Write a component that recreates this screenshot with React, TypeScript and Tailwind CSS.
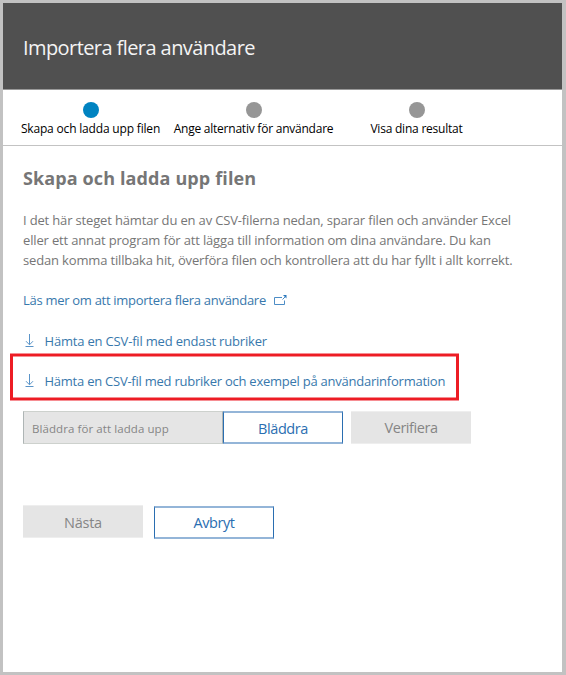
import React from "react";

const steps = [
  { label: "Skapa och ladda upp filen", dot: "bg-[#0083c1]", text: "tracking-[-0.18px]" },
  { label: "Ange alternativ för användare", dot: "bg-[#969696]", text: "tracking-[-0.23px]" },
  { label: "Visa dina resultat", dot: "bg-[#969696]", text: "tracking-[-0.22px]" },
];

function DownloadIcon() {
  return (
    <svg className="h-[14px] w-[9px] shrink-0" viewBox="0 0 9 14" fill="none" stroke="#5a94c8">
      <path d="M4.5 0v10.5M1 7.2l3.5 3.6L8 7.2M.5 12.5h8" />
    </svg>
  );
}

function ExternalIcon() {
  return (
    <svg className="h-[11px] w-[13px] shrink-0" viewBox="0 0 13 11" fill="none" stroke="#4d8dc6">
      <path d="M8 2.5H.5v7h10V5.5M8.5 4.5l3-3" />
      <path d="M9 0h3.5v3.5z" fill="#2a78bd" stroke="none" />
    </svg>
  );
}

export default function App() {
  return (
    <div className="h-[675px] w-[566px] whitespace-nowrap border-[3px] border-r-4 border-[#c2c2c2] bg-white font-['Open_Sans','Noto_Sans',sans-serif] text-[13px] leading-5">
      <header className="flex h-[87px] items-center border-b border-[#999] bg-[#505050] pl-5 pt-[3px] text-[#f4f4f4]">
        <h1 className="text-[20px] font-normal tracking-[-0.58px]">Importera flera användare</h1>
      </header>
      <nav className="flex h-14 border-b border-[#c3c3c3] pl-[6px] pt-3 text-black">
        {steps.map((s) => (
          <div key={s.label} className="flex w-[163px] flex-col items-center">
            <span className={`h-4 w-4 rounded-full ${s.dot}`} />
            <span className={`mt-px text-[12px] leading-5 ${s.text}`}>{s.label}</span>
          </div>
        ))}
      </nav>
      <main className="pl-5 text-[#767676]">
        <h2 className="mt-5 h-6 text-[18px] font-bold leading-6 tracking-[0.12px]">
          <span>Skapa och ladda upp filen</span>
        </h2>
        <div className="mt-5 tracking-[-0.16px]">
          <p>I det här steget hämtar du en av CSV-filerna nedan, sparar filen och använder Excel</p>
          <p>eller ett annat program för att lägga till information om dina användare. Du kan</p>
          <p>sedan komma tillbaka hit, överföra filen och kontrollera att du har fyllt i allt korrekt.</p>
        </div>
        <a className="mt-5 flex items-center gap-2 text-[#3878ac]">
          <span className="tracking-[-0.29px]">Läs mer om att importera flera användare</span>
          <ExternalIcon />
        </a>
        <a className="ml-[1.5px] mt-[21px] flex items-center gap-[11px] text-[#3878ac]">
          <DownloadIcon />
          <span className="tracking-[-0.18px]">Hämta en CSV-fil med endast rubriker</span>
        </a>
        <div className="-ml-[13px] mt-[3px] flex h-[46px] w-[449px] items-center border-x-[3px] border-y-2 border-[#ed1c24] pl-[11.5px] pt-[7px] text-[#3878ac] shadow-[0_1px_0_#f68e93,0_-1px_0_#f68e93,inset_0_1px_0_#f68e93,inset_0_-1px_0_#f68e93]">
          <a className="flex items-center gap-[11px]">
            <DownloadIcon />
            <span className="tracking-[-0.24px]">Hämta en CSV-fil med rubriker och exempel på användarinformation</span>
          </a>
        </div>
        <div className="mt-[11px] flex h-[33px] text-[14.5px]">
          <div className="flex w-[200px] items-center border border-[#aeb5b5] border-y-[#cdd1cd] bg-[#e5e5e5] pl-2 pt-[3px] text-[11.5px] tracking-[0.08px] text-[#858585]">
            <span>Bläddra för att ladda upp</span>
          </div>
          <button className="w-[120px] border border-y-2 border-[#2a6eb1] border-y-[#94b5d8] pt-[3px] tracking-[-0.43px] text-[#2a6eb1]">Bläddra</button>
          <button className="ml-2 w-[120px] border-y border-[#eeeeee] bg-[#e5e5e5] tracking-[-0.45px] text-[#858585]">Verifiera</button>
        </div>
        <div className="mt-[61px] flex gap-[11px] text-[14.5px]">
          <button className="h-[33px] w-[120px] border-y border-[#eeeeee] bg-[#e5e5e5] pt-[3px] tracking-[-0.25px] text-[#858585]">Nästa</button>
          <button className="mt-px h-[33px] w-[120px] border border-y-2 border-[#2a6eb1] border-y-[#94b5d8] tracking-[-0.4px] text-[#2a6eb1]">Avbryt</button>
        </div>
      </main>
    </div>
  );
}
